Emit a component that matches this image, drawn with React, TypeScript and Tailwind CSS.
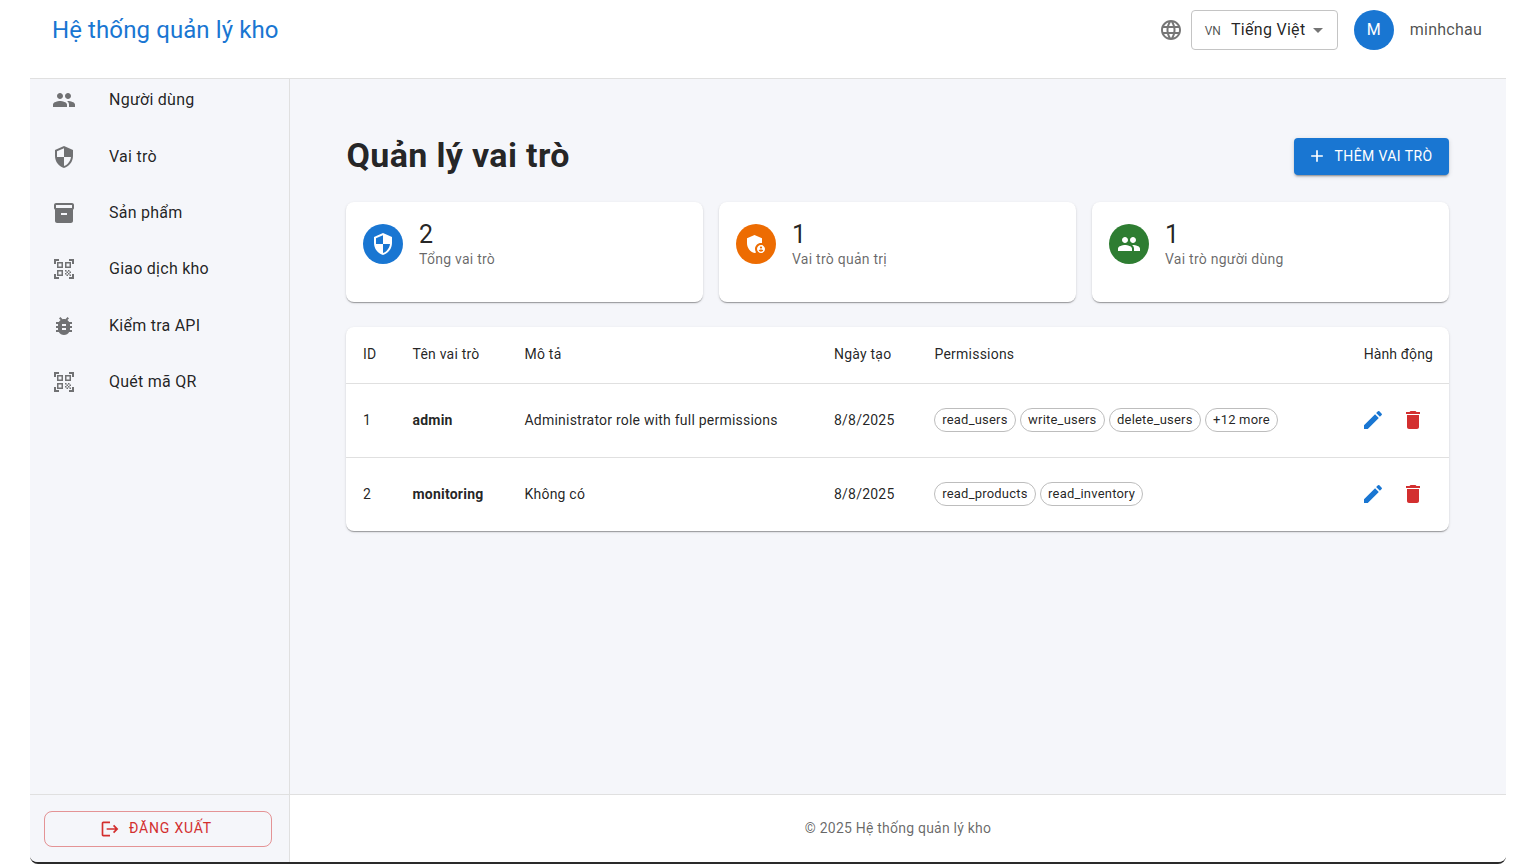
import type { ReactNode } from "react";

const paths = {
  people:
    "M16 11c1.66 0 2.99-1.34 2.99-3S17.66 5 16 5c-1.66 0-3 1.34-3 3s1.34 3 3 3zm-8 0c1.66 0 2.99-1.34 2.99-3S9.66 5 8 5C6.34 5 5 6.34 5 8s1.34 3 3 3zm0 2c-2.33 0-7 1.17-7 3.5V19h14v-2.5c0-2.33-4.67-3.5-7-3.5zm8 0c-.29 0-.62.02-.97.05 1.16.84 1.97 1.97 1.97 3.45V19h6v-2.5c0-2.33-4.67-3.5-7-3.5z",
  security:
    "M12 1 3 5v6c0 5.55 3.84 10.74 9 12 5.16-1.26 9-6.45 9-12V5l-9-4zm0 10.99h7c-.53 4.12-3.28 7.79-7 8.94V12H5V6.3l7-3.11v8.8z",
  inventory:
    "M20 2H4c-1 0-2 .9-2 2v3.01c0 .72.43 1.34 1 1.69V20c0 1.1 1.1 2 2 2h14c.9 0 2-.9 2-2V8.7c.57-.35 1-.97 1-1.69V4c0-1.1-1-2-2-2zm-5 12H9v-2h6v2zm5-7H4V4l16-.02V7z",
  qr: "M9.5 6.5v3h-3v-3h3M11 5H5v6h6V5zm-1.5 9.5v3h-3v-3h3M11 13H5v6h6v-6zm6.5-6.5v3h-3v-3h3M19 5h-6v6h6V5zm-6 8h1.5v1.5H13V13zm1.5 1.5H16V16h-1.5v-1.5zM16 13h1.5v1.5H16V13zm-3 3h1.5v1.5H13V16zm1.5 1.5H16V19h-1.5v-1.5zM16 16h1.5v1.5H16V16zm1.5-1.5H19V16h-1.5v-1.5zm0 3H19V19h-1.5v-1.5zM22 7h-2V4h-3V2h5v5zm0 15v-5h-2v3h-3v2h5zM2 22h5v-2H4v-3H2v5zM2 2v5h2V4h3V2H2z",
  bug: "M20 8h-2.81c-.45-.78-1.07-1.45-1.82-1.96L17 4.41 15.59 3l-2.17 2.17C12.96 5.06 12.49 5 12 5c-.49 0-.96.06-1.41.17L8.41 3 7 4.41l1.62 1.63C7.88 6.55 7.26 7.22 6.81 8H4v2h2.09c-.05.33-.09.66-.09 1v1H4v2h2v1c0 .34.04.67.09 1H4v2h2.81c1.04 1.79 2.97 3 5.19 3s4.15-1.21 5.19-3H20v-2h-2.09c.05-.33.09-.66.09-1v-1h2v-2h-2v-1c0-.34-.04-.67-.09-1H20V8zm-6 8h-4v-2h4v2zm0-4h-4v-2h4v2z",
  language:
    "M11.99 2C6.47 2 2 6.48 2 12s4.47 10 9.99 10C17.52 22 22 17.52 22 12S17.52 2 11.99 2zm6.93 6h-2.95c-.32-1.25-.78-2.45-1.38-3.56 1.84.63 3.37 1.91 4.33 3.56zM12 4.04c.83 1.2 1.48 2.53 1.91 3.96h-3.82c.43-1.43 1.08-2.76 1.91-3.96zM4.26 14C4.1 13.36 4 12.69 4 12s.1-1.36.26-2h3.38c-.08.66-.14 1.32-.14 2 0 .68.06 1.34.14 2H4.26zm.82 2h2.95c.32 1.25.78 2.45 1.38 3.56-1.84-.63-3.37-1.9-4.33-3.56zm2.95-8H5.08c.96-1.66 2.49-2.93 4.33-3.56C8.81 5.55 8.35 6.75 8.03 8zM12 19.96c-.83-1.2-1.48-2.53-1.91-3.96h3.82c-.43 1.43-1.08 2.76-1.91 3.96zM14.34 14H9.66c-.09-.66-.16-1.32-.16-2 0-.68.07-1.35.16-2h4.68c.09.65.16 1.32.16 2 0 .68-.07 1.34-.16 2zm.25 5.56c.6-1.11 1.06-2.31 1.38-3.56h2.95c-.96 1.65-2.49 2.93-4.33 3.56zM16.36 14c.08-.66.14-1.32.14-2 0-.68-.06-1.34-.14-2h3.38c.16.64.26 1.31.26 2s-.1 1.36-.26 2h-3.38z",
  edit: "M3 17.25V21h3.75L17.81 9.94l-3.75-3.75L3 17.25zM20.71 7.04c.39-.39.39-1.02 0-1.41l-2.34-2.34a.9959.9959 0 0 0-1.41 0l-1.83 1.83 3.75 3.75 1.83-1.83z",
  trash: "M6 19c0 1.1.9 2 2 2h8c1.1 0 2-.9 2-2V7H6v12zM19 4h-3.5l-1-1h-5l-1 1H5v2h14V4z",
  add: "M19 13h-6v6h-2v-6H5v-2h6V5h2v6h6v2z",
  logout:
    "m17 7-1.41 1.41L18.17 11H8v2h10.17l-2.58 2.58L17 17l5-5zM4 5h8V3H4c-1.1 0-2 .9-2 2v14c0 1.1.9 2 2 2h8v-2H4V5z",
  admin:
    "M17 11c.34 0 .67.04 1 .09V6.27L10.5 3 3 6.27v4.91c0 4.54 3.2 8.79 7.5 9.82.55-.13 1.08-.32 1.6-.55-.69-.98-1.1-2.17-1.1-3.45 0-3.31 2.69-6 6-6zM17 13c-2.21 0-4 1.79-4 4s1.79 4 4 4 4-1.79 4-4-1.79-4-4-4zm0 1.38c.62 0 1.12.51 1.12 1.12s-.51 1.12-1.12 1.12-1.12-.51-1.12-1.12.5-1.12 1.12-1.12zm0 5.37c-.93 0-1.74-.46-2.24-1.17.05-.72 1.51-1.08 2.24-1.08s2.19.36 2.24 1.08c-.5.71-1.31 1.17-2.24 1.17z",
};

const Icon = ({ d, className }: { d: string; className: string }) => (
  <svg viewBox="0 0 24 24" fill="currentColor" className={className}>
    <path d={d} />
  </svg>
);

const menu = [
  { label: "Người dùng", icon: paths.people },
  { label: "Vai trò", icon: paths.security },
  { label: "Sản phẩm", icon: paths.inventory },
  { label: "Giao dịch kho", icon: paths.qr },
  { label: "Kiểm tra API", icon: paths.bug },
  { label: "Quét mã QR", icon: paths.qr },
];

const stats = [
  { value: "2", label: "Tổng vai trò", icon: paths.security, bg: "bg-[#1976d2]" },
  { value: "1", label: "Vai trò quản trị", icon: paths.admin, bg: "bg-[#ed6c02]" },
  { value: "1", label: "Vai trò người dùng", icon: paths.people, bg: "bg-[#2e7d32]" },
];

const roles = [
  {
    id: 1,
    name: "admin",
    desc: "Administrator role with full permissions",
    date: "8/8/2025",
    perms: ["read_users", "write_users", "delete_users", "+12 more"],
  },
  {
    id: 2,
    name: "monitoring",
    desc: "Không có",
    date: "8/8/2025",
    perms: ["read_products", "read_inventory"],
  },
];

const cardShadow =
  "shadow-[0_2px_1px_-1px_rgba(0,0,0,0.2),0_1px_1px_0_rgba(0,0,0,0.14),0_1px_3px_0_rgba(0,0,0,0.12)]";

const Cell = ({ className, children }: { className: string; children: ReactNode }) => (
  <div className={`shrink-0 pl-4 ${className}`}>{children}</div>
);

export default function App() {
  return (
    <div className="bg-white h-[864px] px-[30px] font-['Roboto',sans-serif] text-[#000000de] overflow-hidden">
      <div className="h-full flex flex-col overflow-hidden rounded-b-[8px] border-b-2 border-[#2a2a2a] bg-white">
        <header className="h-[79px] shrink-0 flex items-center border-b border-[#e0e0e0] pl-[22px] pr-[24px] pb-[18px]">
          <h1 className="text-[24px] leading-[32px] tracking-[0.1px] text-[#1976d2] flex-1">Hệ thống quản lý kho</h1>
          <Icon d={paths.language} className="w-6 h-6 text-[#0000008a]" />
          <div className="ml-2 w-[147px] h-[40px] rounded border border-[#c4c4c4] flex items-center pl-[13px] relative">
            <span className="text-[12px] text-[#000000de] opacity-80 mr-[8px] mt-[2px]">VN</span>
            <span className="text-[16px] tracking-[0.3px] ml-[2px]">Tiếng Việt</span>
            <svg viewBox="0 0 24 24" fill="currentColor" className="w-6 h-6 absolute right-[7px] top-[7px] text-[#0000008a]">
              <path d="M7 10l5 5 5-5z" />
            </svg>
          </div>
          <div className="ml-4 w-10 h-10 rounded-full bg-[#1976d2] text-white flex items-center justify-center text-[16px]">
            M
          </div>
          <span className="ml-4 text-[16px] tracking-[0.25px] text-[#000000b3]">minhchau</span>
        </header>

        <div className="flex-1 min-h-0 flex">
          <aside className="w-[260px] shrink-0 flex flex-col bg-[#f5f6fa] border-r border-[#e0e0e0]">
            <nav className="flex-1 min-h-0 overflow-hidden">
              <ul className="-mt-[7px]">
                {menu.map((item) => (
                  <li key={item.label} className="h-[56.4px] flex items-center pl-[22px]">
                    <Icon d={item.icon} className="w-6 h-6 text-[#0000008a] shrink-0" />
                    <span className="ml-[33px] text-[16px] leading-[24px] tracking-[0.25px]">{item.label}</span>
                  </li>
                ))}
              </ul>
            </nav>
            <div className="h-[68px] shrink-0 border-t border-[#e0e0e0] pl-[14px] pr-[17px] flex items-center">
              <button
                type="button"
                className="w-full h-[36px] pr-1 rounded-[8px] border border-[#d32f2f80] text-[#d32f2f] flex items-center justify-center text-[14px] tracking-[0.8px]"
              >
                <Icon d={paths.logout} className="w-5 h-5 mr-[9px]" />
                ĐĂNG XUẤT
              </button>
            </div>
          </aside>

          <div className="flex-1 min-w-0 flex flex-col">
            <main className="flex-1 min-h-0 bg-[#f5f6fa] pt-[59px] pl-[56px] pr-[57px]">
              <div className="flex items-center justify-between h-[36px]">
                <h2 className="ml-[0.5px] text-[34px] leading-[36px] font-bold tracking-[0.35px] -mt-[2px]">Quản lý vai trò</h2>
                <button
                  type="button"
                  className="h-[37px] w-[155px] pr-1 rounded bg-[#1976d2] text-white flex items-center justify-center text-[14px] tracking-[0.4px] shadow-[0_3px_1px_-2px_rgba(0,0,0,0.2),0_2px_2px_0_rgba(0,0,0,0.14),0_1px_5px_0_rgba(0,0,0,0.12)]"
                >
                  <Icon d={paths.add} className="w-5 h-5 mr-2" />
                  THÊM VAI TRÒ
                </button>
              </div>

              <div className="mt-[28px] grid grid-cols-3 gap-4">
                {stats.map((s) => (
                  <div key={s.label} className={`h-[100px] rounded-[8px] bg-white pl-[17px] pt-[22px] flex items-start ${cardShadow}`}>
                    <div className={`w-10 h-10 rounded-full text-white flex items-center justify-center ${s.bg}`}>
                      <Icon d={s.icon} className="w-6 h-6" />
                    </div>
                    <div className="ml-4 -mt-[4px]">
                      <div className="text-[25px] leading-[29px]">{s.value}</div>
                      <div className="text-[14px] leading-[20px] tracking-[0.25px] text-[#00000099]">{s.label}</div>
                    </div>
                  </div>
                ))}
              </div>

              <div className={`mt-[25px] rounded-[8px] bg-white ${cardShadow}`}>
                <div className="h-[57px] pb-[2px] flex items-center border-b border-[#e0e0e0] text-[14px] tracking-[0.22px]">
                  <Cell className="w-[50.5px] pl-[17px]">ID</Cell>
                  <Cell className="w-[112px]">Tên vai trò</Cell>
                  <Cell className="w-[309.5px]">Mô tả</Cell>
                  <Cell className="w-[100.5px]">Ngày tạo</Cell>
                  <Cell className="flex-1">Permissions</Cell>
                  <div className="pr-4 tracking-[0.1px]">Hành động</div>
                </div>
                {roles.map((r, i) => (
                  <div
                    key={r.id}
                    className={`flex items-center text-[14px] tracking-[0.22px] ${i === 0 ? "h-[74px] pb-[1px] border-b border-[#e0e0e0]" : "h-[73px] pb-[1px]"}`}
                  >
                    <Cell className="w-[50.5px] pl-[17px]">{r.id}</Cell>
                    <Cell className="w-[112px] font-bold">{r.name}</Cell>
                    <Cell className="w-[309.5px]">{r.desc}</Cell>
                    <Cell className="w-[100px]">{r.date}</Cell>
                    <Cell className="flex-1 flex gap-1">
                      {r.perms.map((p) => (
                        <span
                          key={p}
                          className="h-6 px-[7.25px] rounded-full border border-[#bdbdbd] text-[13px] leading-[22px] tracking-[0.2px] whitespace-nowrap"
                        >
                          {p}
                        </span>
                      ))}
                    </Cell>
                    <div className="flex items-center pr-[24px] gap-4">
                      <Icon d={paths.edit} className="w-6 h-6 text-[#1976d2]" />
                      <Icon d={paths.trash} className="w-6 h-6 text-[#d32f2f]" />
                    </div>
                  </div>
                ))}
              </div>
            </main>
            <footer className="h-[68px] shrink-0 border-t border-[#e0e0e0] bg-white flex items-center justify-center text-[14px] tracking-[0.22px] text-[#00000099]">
              © 2025 Hệ thống quản lý kho
            </footer>
          </div>
        </div>
      </div>
    </div>
  );
}
